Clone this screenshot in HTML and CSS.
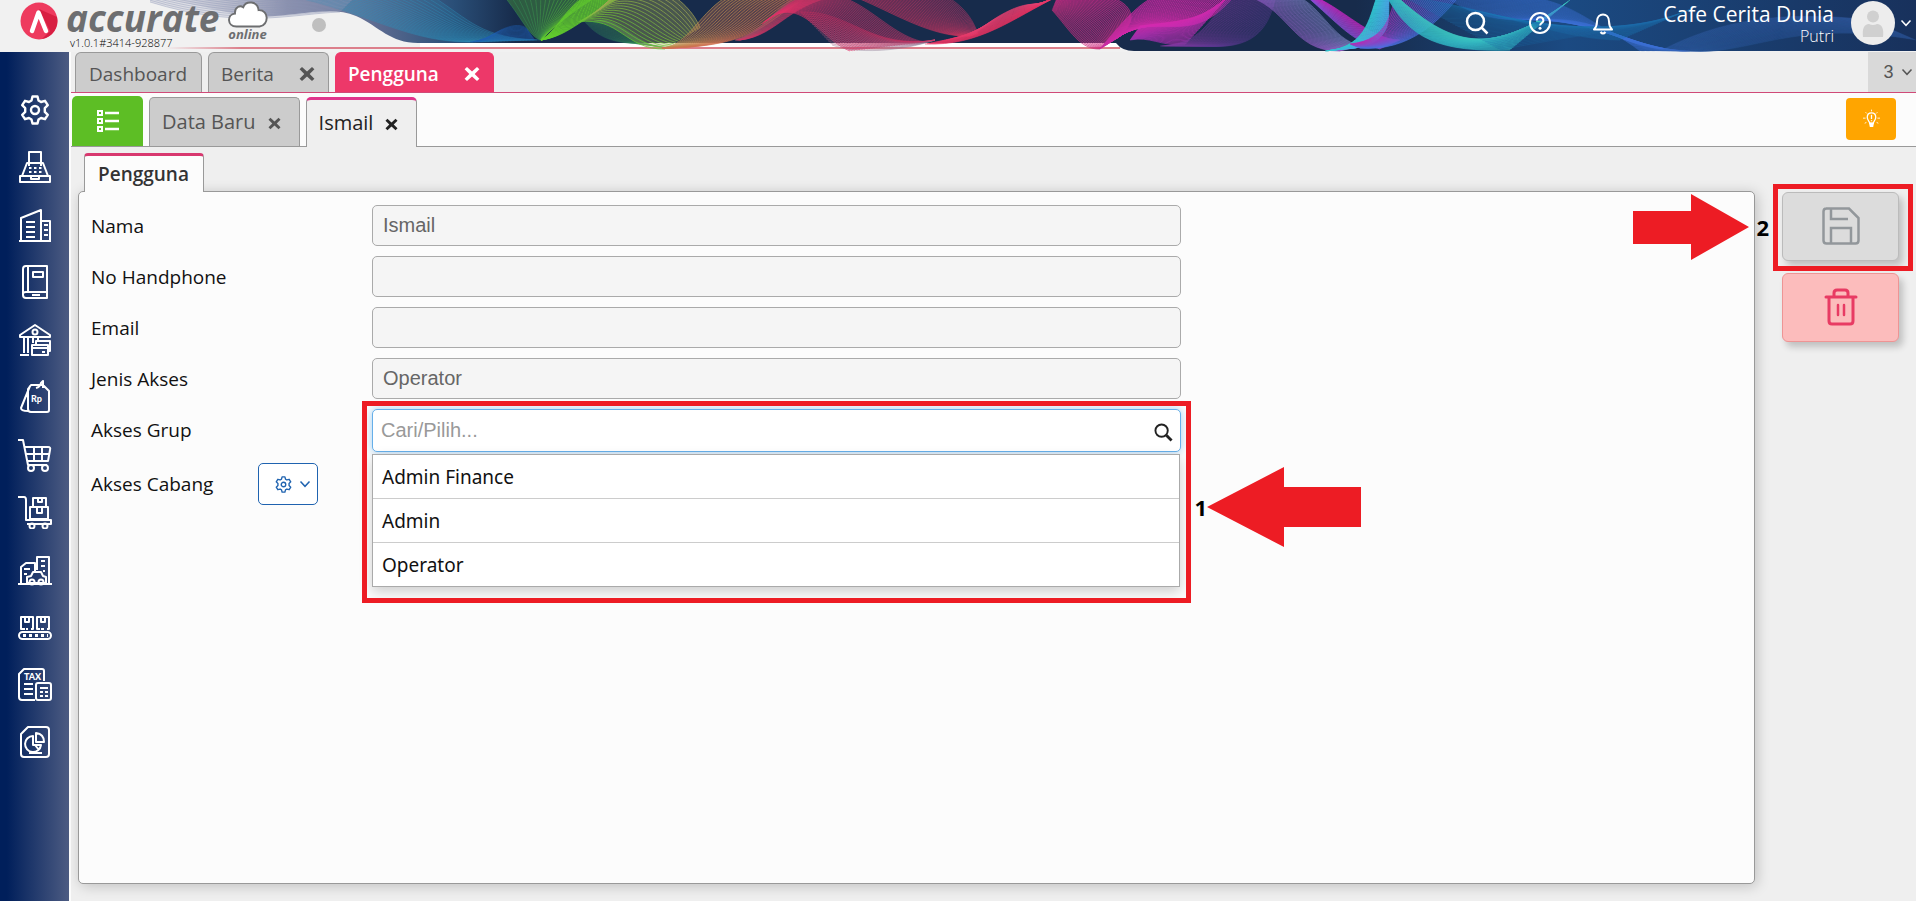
FILE: index.html
```html
<!DOCTYPE html>
<html lang="id">
<head>
<meta charset="utf-8">
<title>Accurate Online - Pengguna</title>
<link rel="stylesheet" href="styles.css">
</head>
<body>
<svg class="defs" aria-hidden="true">
  <symbol id="x" viewBox="0 0 16 16"><path d="M3 1 8 5.6 13 1 15.4 3.3 10.700 8 15.400 12.700 13 15 8 10.400 3 15 .6 12.700 5.300 8 .6 3.300Z" fill="currentColor"/></symbol>
  <symbol id="gear" viewBox="0 0 30 30"><g fill="none" stroke="currentColor" stroke-width="2.400" stroke-linejoin="round"><path d="M12.500 1.500h5l1 4 2.500 1.500 4-1.200 2.800 4.400-3 2.900v3.800l3 2.900-2.800 4.400-4-1.200-2.500 1.500-1 4h-5l-1-4-2.500-1.500-4 1.200-2.800-4.400 3-2.900v-3.800l-3-2.900 2.800-4.400 4 1.200 2.500-1.500z"/><circle cx="15" cy="15" r="4"/></g></symbol>
  <symbol id="chev" viewBox="0 0 12 12"><path d="M1.500 3.500 6 8.300l4.500-4.800" fill="none" stroke="currentColor" stroke-width="1.500"/></symbol>
</svg>

<header class="top">
  <svg class="waves" id="waves" viewBox="0 0 1916 52" preserveAspectRatio="none" aria-hidden="true">
    <defs>
      <linearGradient id="base" x1="0" x2="1"><stop offset="0" stop-color="#c9cbd6" stop-opacity=".2"/><stop offset=".07" stop-color="#8b91ad"/><stop offset=".12" stop-color="#5d6b91"/><stop offset=".165" stop-color="#2a4f78"/><stop offset=".2" stop-color="#172b4b"/><stop offset=".68" stop-color="#172b4b"/><stop offset=".8" stop-color="#1b4a82"/><stop offset="1" stop-color="#18315c"/></linearGradient>
      <linearGradient id="rule" x1="0" x2="1"><stop offset="0" stop-color="#dc7f8b" stop-opacity="0"/><stop offset=".08" stop-color="#dc7f8b"/><stop offset="1" stop-color="#dc7f8b"/></linearGradient>
    </defs>
    <path d="M420 43 1115 43 1125 47 420 47Z" fill="#fff"/>
    <path d="M165 0C205 4 235 19 275 16C310 13 335 7 356 16C380 27 390 43 418 43L1116 43Q1122 51 1134 51L1916 51V0Z" fill="url(#base)"/>
    <rect x="165" y="47" width="955" height="2" fill="url(#rule)"/>
  </svg>
  <div class="brand">
    <svg class="mark" viewBox="0 0 38 38" aria-hidden="true"><circle cx="19" cy="19" r="18.500" fill="#ee3a5e"/><path d="M19 7 30 29 22 37A18.500 18.500 0 0 0 37 15Z" fill="#d81f42"/><path d="M12 29 18.500 10.500 26 29" fill="none" stroke="#fff" stroke-width="4.500" stroke-linecap="round" stroke-linejoin="round"/></svg>
    <div class="brand-name"><span class="word">accurate</span><span class="version">v1.0.1#3414-928877</span></div>
    <div class="brand-cloud">
      <svg viewBox="0 0 42 28" aria-hidden="true"><path d="M9 26.500C-1 26-1 14 7.500 13C7 6 13 4 16 6.500C19-1 31 0 32 9.500C43 9 43 25 33 26.500Z" fill="#fff" stroke="#6d6e70" stroke-width="2"/></svg>
      <span>online</span>
    </div>
    <i class="status"></i>
  </div>
  <div class="tools">
    <button aria-label="Cari"><svg viewBox="0 0 24 24"><g fill="none" stroke="#fff" stroke-width="2.500"><circle cx="10.500" cy="10.500" r="8.500"/><path d="m16.500 16.500 6 6"/></g></svg></button>
    <button aria-label="Bantuan"><svg viewBox="0 0 24 24"><g fill="none" stroke="#fff" stroke-width="2"><circle cx="12" cy="12" r="10"/><path d="M8.800 9.500c0-4.500 6.600-4 6.600 0 0 2.500-3.300 2.500-3.300 5"/></g><circle cx="12" cy="17.300" r="1.500" fill="#fff"/></svg></button>
    <button aria-label="Notifikasi"><svg viewBox="0 0 24 24"><g fill="none" stroke="#fff" stroke-width="2"><path d="M3 18.500c2-2 3-4 3-8 0-9.500 12-9.500 12 0 0 4 1 6 3 8z" stroke-linejoin="round"/><path d="M9.500 21q2.500 3 5 0"/></g></svg></button>
    <div class="who"><strong>Cafe Cerita Dunia</strong><span>Putri</span></div>
    <button class="account" aria-label="Akun">
      <svg class="avatar" viewBox="0 0 44 44"><circle cx="22" cy="22" r="22" fill="#ededed"/><circle cx="22" cy="15.500" r="6" fill="#d0d0d0"/><path d="M12 36c-1-8 1-13 6-13q4 2 8 0c5 0 7 5 6 13z" fill="#d0d0d0"/></svg>
      <svg class="caret"><use href="#chev"/></svg>
    </button>
  </div>
</header>

<div class="shell">
  <nav class="rail" aria-label="Modul">
    <button aria-label="Pengaturan"><svg viewBox="0 0 30 30"><use href="#gear"/></svg></button>
    <button aria-label="Kasir"><svg viewBox="0 0 34 34"><path d="M2 26h30v6H2zM4 26 9 13h16l5 13M11 16V2h12v14M13 26v3h8v-3"/><path d="M11 18h13M11 22h13" stroke-dasharray="2.500 2.500"/></svg></button>
    <button aria-label="Perusahaan"><svg viewBox="0 0 34 34"><path d="M1 33h32M3 33V10l20-8v31M23 13h9v20M8 14h9M8 19h9M8 24h9M8 29h9M26 17h4M26 22h4M26 27h4"/></svg></button>
    <button aria-label="Buku Besar"><svg viewBox="0 0 34 34"><path d="M8 1h21v32H8q-3 0-3-3V4q0-3 3-3zM10 1v26M5 29q0-2 3-2h21M15 7h10v5H15zM14 30h8"/></svg></button>
    <button aria-label="Kas &amp; Bank"><svg viewBox="0 0 34 34"><path d="M2 12 17 2l15 10v2H2zM6 14v16M10 14v16M2 32h9M15 14v6M20 14v3"/><circle cx="17" cy="9" r="2.500"/><path d="M16 22h14v10H14V22zM14 25h16M18 22v-4h14v10h-2M24 29h3"/></svg></button>
    <button aria-label="Penjualan"><svg viewBox="0 0 34 34"><path d="M13 5h12l6 6v19q0 2-2 2H13q-3 0-3-3V9zM12 6 3 28q0 3 7 3M18 8q4-1 5-5l2-2v7"/><text x="13" y="22">Rp</text></svg></button>
    <button aria-label="Pembelian"><svg viewBox="0 0 34 34"><path d="M0 2h5l5 25h19M7 9h23q3 0 2 3l-2 11H9M8 16h23M16 9v14M24 9v14"/><circle cx="13" cy="30" r="3"/><circle cx="27" cy="30" r="3"/></svg></button>
    <button aria-label="Persediaan"><svg viewBox="0 0 34 34"><path d="M0 2h6q2 0 2 3v20h25v4H9M12 12h18v12H12zM15 3h13v9H15zM20 3v4h4V3M19 13v5h5v-5"/><circle cx="14" cy="31" r="2.500"/><circle cx="27" cy="31" r="2.500"/></svg></button>
    <button aria-label="Aset Tetap"><svg viewBox="0 0 34 34"><path d="M0 31h34M3 30V14l5-4h9v8M19 17V4h12v26M23 8h4M23 13h4M25 18h2M6 16h6M6 21h3M9 30v-6l4-1 2-4h8l2 4 3 1v6z"/><circle cx="14" cy="29" r="2.500"/><circle cx="23" cy="29" r="2.500"/></svg></button>
    <button aria-label="Manufaktur"><svg viewBox="0 0 34 34"><path d="M7 19H3V7h12v12h-2M22 19h-3V7h12v12h-2M7 7v5h4V7M23 7v5h4V7M8 19h2M23 19h3"/><rect x="1" y="22" width="32" height="7" rx="3.500"/><path d="M5 25.500h25" stroke-width="3" stroke-dasharray="3"/></svg></button>
    <button aria-label="Pajak"><svg viewBox="0 0 34 34"><path d="M17 32H4q-3 0-3-3V6l5-5h18q2 0 2 2v10M6 16h9M6 21h9M6 26h9"/><rect x="18" y="15" width="15" height="17" rx="2"/><path d="M22 20h8M22 24h3M27 24h3M22 28h3M27 28h3"/><text x="6" y="12">TAX</text></svg></button>
    <button aria-label="Laporan"><svg viewBox="0 0 34 34"><path d="M10 2h18q3 0 3 3v24q0 3-3 3H6q-3 0-3-3V9zM15 11a8 8 0 1 0 8 9h-8zM18 8v9h8q0-8-8-9zM17 20l4 5M11 28h13"/></svg></button>
  </nav>

  <main class="work">
    <div class="tabs">
      <button class="tab">Dashboard</button>
      <button class="tab wide">Berita<svg><use href="#x"/></svg></button>
      <button class="tab wide active">Pengguna<svg><use href="#x"/></svg></button>
      <button class="count">3<svg><use href="#chev"/></svg></button>
    </div>
    <div class="subtabs">
      <button class="list" aria-label="Daftar"><svg viewBox="0 0 24 24"><g fill="none" stroke="#fff" stroke-width="2"><path d="M2 2h4v4H2zM2 10h4v4H2zM2 18h4v4H2z"/><path d="M9 4h14M9 12h14M9 20h14" stroke-width="2.500"/></g></svg></button>
      <button class="subtab">Data Baru<svg><use href="#x"/></svg></button>
      <button class="subtab current">Ismail<svg><use href="#x"/></svg></button>
      <button class="hint" aria-label="Petunjuk"><svg viewBox="0 0 20 22"><g fill="none" stroke="#fff" stroke-width="1.500"><path d="M8 16c0-2-3-3-3-7 0-7 10-7 10 0 0 4-3 5-3 7z"/><path d="M10 6v5M10 12.500v1"/><path d="M10 0v2M3 3l1.500 1.500M17 3l-1.500 1.500M0 10h3M17 10h3M2 16l2-1M18 16l-2-1" stroke-width="1"/></g><path d="M7 15.500h6l-1 5H8z" fill="#fff"/></svg></button>
    </div>

    <div class="page">
      <section class="sheet">
        <h1 class="sheet-tab">Pengguna</h1>
        <form class="panel">
          <label for="nama">Nama</label><input id="nama" value="Ismail" disabled>
          <label for="hp">No Handphone</label><input id="hp" disabled>
          <label for="email">Email</label><input id="email" disabled>
          <label for="jenis">Jenis Akses</label><input id="jenis" value="Operator" disabled>
          <label for="grup">Akses Grup</label>
          <div class="combo">
            <input id="grup" class="focus" placeholder="Cari/Pilih...">
            <svg class="glass" viewBox="0 0 20 20"><g fill="none" stroke="#222"><circle cx="8" cy="8" r="6.500" stroke-width="2"/><path d="m13 13 5.500 5.500" stroke-width="3"/></g></svg>
            <ul class="options">
              <li>Admin Finance</li>
              <li>Admin</li>
              <li>Operator</li>
            </ul>
            <div class="callout callout-list"></div>
            <div class="step step-one"><b>1</b><svg viewBox="0 0 154 80"><path d="M0 40 77 0V20H154V60H77V80Z" fill="#ed1c24"/></svg></div>
          </div>
          <div class="branch"><span>Akses Cabang</span><button type="button" aria-label="Atur cabang"><svg class="cog"><use href="#gear"/></svg><svg class="down"><use href="#chev"/></svg></button></div>
        </form>
      </section>
      <aside class="actions">
        <button class="save" aria-label="Simpan"><svg viewBox="0 0 38 38"><g fill="none" stroke="#92979b" stroke-width="2.500"><path d="M4 1.500h23l9.500 9.500v22.500q0 3-3 3H4.500q-3 0-3-3V4.500q0-3 3-3zM9 36V21h20v15M9 2v10h17"/></g></svg></button>
        <button class="remove" aria-label="Hapus"><svg viewBox="0 0 38 38"><g fill="none" stroke="#e83b63" stroke-width="3" stroke-linecap="round" stroke-linejoin="round"><path d="M4 9h30M12 9V5q0-3 3-3h8q3 0 3 3v4M7 9v24q0 3 3 3h18q3 0 3-3V9"/><path d="M16 17v10M22 17v10" stroke-width="2.500"/></g></svg></button>
        <div class="callout callout-save"></div>
        <div class="step step-two"><svg viewBox="0 0 116 66"><path d="M0 17H58V0L116 33 58 66V50H0Z" fill="#ed1c24"/></svg><b>2</b></div>
      </aside>
    </div>
  </main>
</div>
<script src="waves.js"></script>
</body>
</html>
```
FILE: styles.css
```css
* { box-sizing: border-box; }
body { margin: 0; height: 100vh; display: flex; flex-direction: column; font-family: "Open Sans", "Noto Sans", sans-serif; font-size: 19px; color: #111; background: #efefef; overflow: hidden; }
button { font: inherit; color: inherit; border: 0; padding: 0; background: none; display: flex; align-items: center; justify-content: center; }
.defs { display: none; }
svg { flex: none; }

.top { position: relative; flex: 0 0 52px; display: flex; justify-content: space-between; background: #f1f1f1; }
.waves { position: absolute; top: 0; left: 0; width: 100%; height: 52px; }
.brand, .tools { position: relative; display: flex; align-items: center; height: 52px; }
.brand { padding-left: 20px; align-items: flex-start; }
.mark { width: 38px; height: 38px; margin-top: 2px; }
.brand-name { display: flex; flex-direction: column; padding-left: 8px; width: 169px; }
.word { font-family: "Open Sans", sans-serif; font-style: italic; font-weight: 700; font-size: 37px; line-height: 35px; color: #6d6e70; }
.version { font-size: 11px; font-weight: 300; line-height: 15px; padding-left: 4px; color: #000; }
.brand-cloud { display: flex; flex-direction: column; align-items: center; width: 41px; padding-top: 1px; }
.brand-cloud svg { width: 42px; height: 27px; }
.brand-cloud span { font-style: italic; font-weight: 700; font-size: 13px; line-height: 12px; color: #6d6e70; }
.status { width: 14px; height: 14px; border-radius: 50%; background: #bfbfbf; margin: 18px 0 0 44px; }
.tools button svg { width: 24px; height: 24px; }
.tools > button { width: 24px; margin-right: 39px; height: 45px; align-self: flex-start; }
.tools > button:nth-child(3) { margin-right: 44px; }
.who { display: flex; flex-direction: column; align-items: flex-end; color: #fff; align-self: flex-start; min-width: 175px; }
.who strong { font-weight: 400; font-size: 21px; line-height: 28px; }
.who span { font-size: 16px; line-height: 16px; font-weight: 300; }
.tools > .account { width: auto; margin: 0 4px 0 17px; color: #fff; gap: 5px; }
.account svg.avatar { width: 44px; height: 44px; }
.tools .account svg.caret { width: 12px; height: 12px; }

.shell { flex: 1; display: flex; min-height: 0; }
.rail { flex: 0 0 69px; display: flex; flex-direction: column; padding: 29px 0 130px; color: #fff; background: linear-gradient(90deg, #001f5b 10%, #4c5b82); }
.rail button { flex: 1; }
.rail svg { width: 34px; height: 34px; fill: none; stroke: #fff; stroke-width: 2; stroke-linejoin: round; }
.rail button:first-child svg { width: 30px; height: 30px; }
.rail text { font: 900 9px Lato, sans-serif; fill: #fff; stroke: none; }
.work { flex: 1; display: flex; flex-direction: column; min-width: 0; border-left: 2px solid #fcfcfc; }

.tabs { display: flex; gap: 6px; flex: 0 0 41px; padding-left: 4px; border-bottom: 1px solid #d04a78; }
.tab { border: 1px solid #999; border-bottom: 0; border-radius: 6px 6px 0 0; background: #ccc; color: #555; padding: 3px 14px 0 13px; }
.wide { justify-content: space-between; padding: 3px 13px 0 12px; gap: 25px; }
.tab svg { width: 16px; height: 16px; }
.tab.active { background: #ed3869; border-color: #ed3869; color: #fff; font-weight: 600; }
.count { width: 48px; margin-left: auto; background: #d9d9d9; color: #555; font: 18px "Liberation Sans", sans-serif; gap: 7px; padding-left: 12px; }
.count svg { width: 12px; height: 12px; }

.subtabs { display: flex; align-items: flex-end; flex: 0 0 54px; gap: 6px; padding-left: 1px; background: #fcfcfc; border-bottom: 1px solid #999; }
.list { width: 71px; height: 50px; background: #5dbe25; border-radius: 5px 5px 0 0; }
.list svg { width: 24px; height: 24px; }
.subtab { height: 49px; padding: 0 18px 2px 12px; gap: 12px; background: #ccc; color: #555; border: 1px solid #999; border-bottom: 0; border-radius: 5px 5px 0 0; font-size: 20px; }
.subtab svg { width: 13px; height: 13px; margin-top: 4px; }
.current { height: 50px; background: #efefef; color: #222; border-top: 3px solid #e0358c; margin-bottom: -1px; }
.hint { width: 50px; height: 42px; border-radius: 4px; background: #ffa500; margin: 0 20px 6px auto; }
.hint svg { width: 17px; height: 20px; }

.page { flex: 1; display: flex; gap: 27px; padding: 6px 17px 17px 7px; min-height: 0; }
.sheet { flex: 1; display: flex; flex-direction: column; min-width: 0; }
.sheet-tab { position: relative; z-index: 1; align-self: flex-start; margin: 0 0 -1px 6px; padding: 1px 14px 0 13px; border: 1px solid #999; border-top: 3px solid #d8386f; border-bottom: 0; border-radius: 4px 4px 0 0; background: #fcfcfc; font-size: 19px; line-height: 35px; font-weight: 600; color: #333; }
.panel { flex: 1; display: grid; grid-template-columns: 281px 49%; grid-auto-rows: 41px; row-gap: 10px; align-content: start; padding: 13px 13px 13px 12px; background: #fcfcfc; border: 1px solid #999; border-radius: 5px; box-shadow: 2px 2px 14px rgba(0, 0, 0, .2); }
.panel > label { line-height: 43px; }
.panel input { width: 100%; height: 41px; border: 1px solid #aaa; border-radius: 5px; background: #f5f5f5; padding: 0 10px 1px; font: 20px "Liberation Sans", sans-serif; color: #666; }
.combo { position: relative; }
.panel input.focus { height: 43px; background: #fff; border-color: #66afe9; padding-left: 8px; box-shadow: 0 0 8px rgba(102, 175, 233, .6); }
.focus::placeholder { color: #999; }
.glass { position: absolute; right: 8px; top: 14px; width: 19px; height: 19px; }
.options { position: absolute; z-index: 1; top: 45px; left: 0; right: 1px; margin: 0; padding: 0; list-style: none; background: #fff; border: 1px solid #aaa; box-shadow: 0 5px 12px rgba(0, 0, 0, .18); font-family: "Noto Sans", sans-serif; }
.options li { height: 43px; line-height: 45px; padding-left: 9px; box-sizing: content-box; }
.options li + li { border-top: 1px solid #ccc; }
.callout { position: absolute; border: 5px solid #ed1c24; pointer-events: none; }
.callout-list { top: -8px; left: -10px; right: -10px; height: 202px; z-index: 2; }
.step { position: absolute; display: flex; align-items: center; }
.step b { font: 700 22px "Open Sans", sans-serif; color: #000; }
.step-one { left: 100%; top: 58px; margin-left: 14px; }
.step-one svg { width: 154px; height: 80px; }
.branch { display: flex; justify-content: space-between; align-items: center; width: 227px; margin-top: 7px; }
.branch button { width: 60px; height: 42px; border: 1px solid #1f63b0; border-radius: 5px; color: #1f63b0; background: #fff; gap: 7px; padding-left: 9px; }
.cog { width: 17px; height: 17px; }
.down { width: 12px; height: 12px; }

.actions { position: relative; flex: 0 0 117px; display: flex; flex-direction: column; gap: 12px; padding-top: 39px; }
.actions button { height: 69px; padding-bottom: 2px; border-radius: 6px; box-shadow: 4px 5px 7px rgba(0, 0, 0, .2); }
.actions button svg { width: 38px; height: 38px; }
.save { background: #dcdcdc; border: 1px solid #bbb; }
.remove { background: #fcbcbc; border: 1px solid #ee9494; }
.callout-save { top: 31px; left: -9px; right: -14px; height: 87px; }
.step-two { right: 100%; top: 41px; margin-right: 13px; gap: 7px; }
.step-two svg { width: 116px; height: 66px; }
```
FILE: waves.js
```js
// Each ribbon is a family of cubic curves blended between two edge curves.
// Edge: [x0,y0, c1x,c1y, c2x,c2y, x1,y1]
const ribbons = [
  ['#2d8fb8', '#2d8fb8', 22, .4, [250,-10,350,0,400,43,470,42], [432,-4,470,20,480,38,540,40]],
  ['#8a93b5', '#8a93b5', 12, .4, [150,2,240,30,290,14,340,12], [150,-20,240,-5,300,5,360,-8]],
  ['#1f5fb5', '#1f5fb5', 12, .4, [470,42,490,41,510,40,535,40], [485,40,500,28,520,20,528,30]],
  ['#2f7f55', '#62cc2d', 22, .6, [503,-5,520,15,530,38,541,40], [640,-25,600,-10,560,20,541,40]],
  ['#62cc2d', '#62cc2d', 20, .8, [541,40,570,36,585,15,625,-5], [541,40,560,30,570,-5,600,-8]],
  ['#2f8060', '#3f9a50', 20, .3, [585,22,600,40,620,44,640,43], [600,20,620,18,640,48,665,47]],
  ['#62cc2d', '#a5a555', 16, .7, [578,22,620,16,625,50,665,49], [600,10,640,-40,690,0,700,28]],
  ['#b9964e', '#d07050', 22, .65, [662,48,690,45,700,10,730,-5], [662,48,770,48,770,10,815,-5]],
  ['#a05565', '#d03565', 20, .5, [735,40,770,30,780,-5,820,-15], [740,40,780,36,790,-2,850,-5]],
  ['#ed2f68', '#b83565', 30, .55, [762,24,800,-10,820,40,850,51], [790,3,850,-30,880,35,925,42]],
  ['#7e8099', '#d03060', 16, .35, [832,45,855,54,900,52,935,40], [800,12,850,10,870,50,935,40]],
  ['#e83562', '#a83562', 30, .5, [850,-5,890,10,930,38,970,36], [900,-20,950,-10,970,10,978,34]],
  ['#ed3060', '#e04070', 24, .6, [925,44,980,46,1010,20,1060,-5], [975,34,990,20,1020,0,1040,5]],
  ['#c8307a', '#d82a90', 34, .6, [1052,10,1070,30,1080,50,1100,49], [1060,-10,1120,-10,1150,10,1118,38]],
  ['#c52aa0', '#ce2aa8', 40, .75, [1100,49,1120,25,1140,0,1160,-5], [1120,36,1160,10,1190,50,1235,-5]],
  ['#a830b8', '#d52ab0', 30, .6, [1130,40,1150,36,1160,46,1185,45], [1140,26,1190,20,1200,20,1230,-5]],
  ['#8a3aa5', '#5a3a90', 40, .4, [1160,46,1200,45,1210,20,1230,-5], [1210,46,1260,50,1270,20,1275,0]],
  ['#9858c8', '#7f86c8', 32, .5, [1240,-6,1290,5,1290,52,1340,51], [1290,-6,1320,0,1330,40,1362,46]],
  ['#8a55e0', '#c228c0', 24, .6, [1305,-5,1340,25,1350,40,1380,49], [1310,-5,1340,5,1370,40,1400,40]],
  ['#30c8d0', '#4aa8e8', 32, .8, [1325,51,1370,48,1370,10,1378,-5], [1355,48,1400,40,1385,10,1390,-5]],
  ['#c020b0', '#4a70e0', 28, .65, [1350,44,1390,40,1390,10,1395,0], [1360,48,1410,52,1440,20,1460,-5]],
  ['#2fb5c5', '#3cc4c0', 34, .65, [1386,-5,1410,40,1440,52,1510,50], [1395,-5,1450,45,1490,60,1570,0]],
  ['#3d6fd5', '#3d6fd5', 40, .35, [1450,0,1520,45,1560,-10,1640,51], [1520,-5,1600,5,1600,51,1690,51]],
  ['#1a7ab8', '#1a6aa8', 40, .25, [1400,-5,1500,10,1560,40,1620,40], [1500,50,1600,30,1650,30,1700,5]],
  ['#3a68b8', '#2d5aa0', 40, .25, [1660,51,1720,20,1780,10,1870,20], [1700,52,1760,50,1800,20,1916,40]]
];
const NS = 'http://www.w3.org/2000/svg';
const svg = document.getElementById('waves');
const mix = (a, b, t) => a + (b - a) * t;
const curve = p => `M${p[0]} ${p[1]}C${p.slice(2).join(' ')}`;
const channel = (hex, i) => parseInt(hex.substr(1 + i * 2, 2), 16);
function add(attrs) {
  const el = document.createElementNS(NS, 'path');
  for (const key in attrs) el.setAttribute(key, attrs[key]);
  svg.appendChild(el);
}
for (const [from, to, count, alpha, a, b] of ribbons) {
  const back = [b[6], b[7], b[4], b[5], b[2], b[3], b[0], b[1]];
  add({ d: `${curve(a)}L${back[0]} ${back[1]}C${back.slice(2).join(' ')}Z`, fill: to, opacity: alpha * .5 });
  for (let i = 0; i <= count; i++) {
    const t = i / count;
    const rgb = [0, 1, 2].map(c => Math.round(mix(channel(from, c), channel(to, c), t)));
    add({ d: curve(a.map((v, k) => mix(v, b[k], t))), fill: 'none', stroke: `rgb(${rgb})`, 'stroke-width': 1, opacity: alpha });
  }
}
```
